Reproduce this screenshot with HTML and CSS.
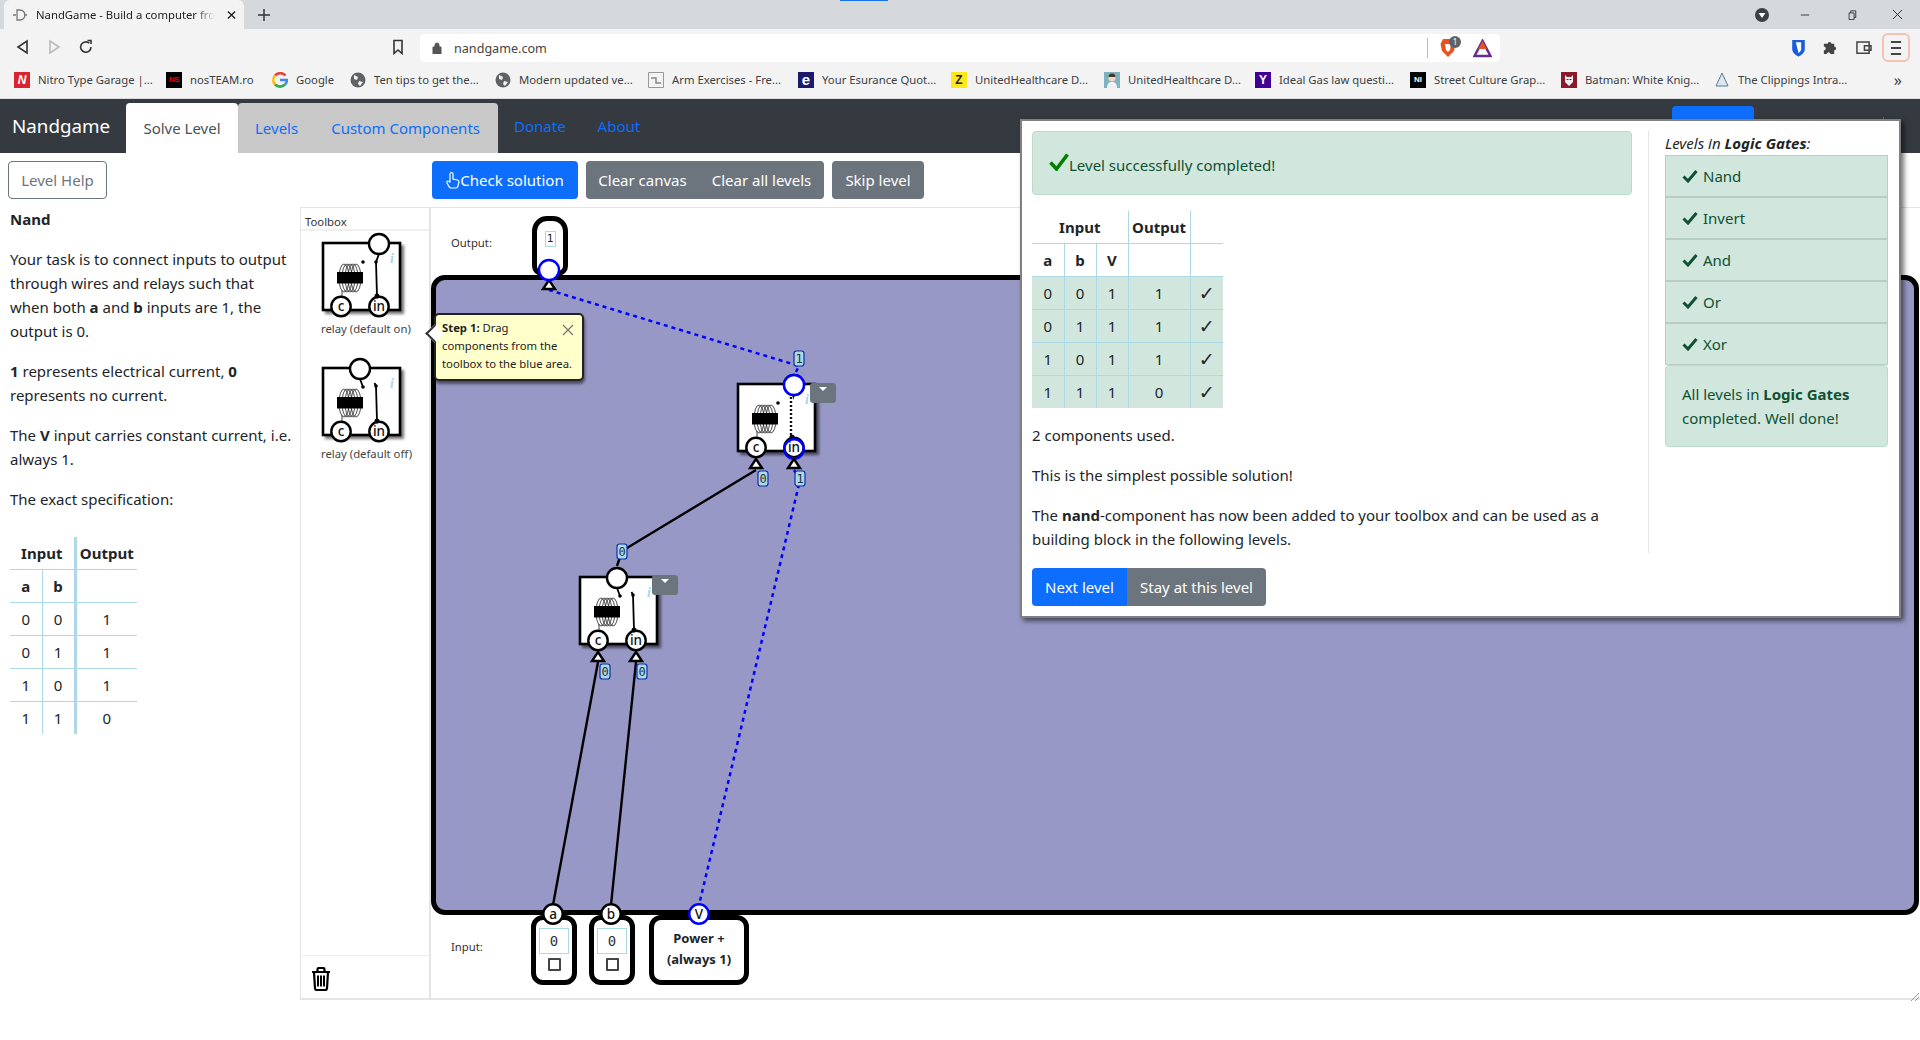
FILE: index.html
```html
<!DOCTYPE html>
<html lang="en">
<head>
<meta charset="utf-8">
<title>NandGame - Build a computer from scratch</title>
<link rel="stylesheet" href="styles.css">
</head>
<body>
<svg class="defs" aria-hidden="true">
  <defs>
    <filter id="soft" x="-20%" y="-20%" width="140%" height="140%"><feGaussianBlur stdDeviation="1.6"/></filter>
    <symbol id="relay-body" viewBox="-2 -11 100 86" overflow="visible">
      <rect x="3" y="3" width="79" height="69" fill="#000" opacity=".55" filter="url(#soft)"/>
      <rect x="1" y="1" width="77" height="67" fill="#fff" stroke="#000" stroke-width="2.6"/>
      <g fill="none" stroke="#222" stroke-width=".8">
        <ellipse cx="22" cy="36" rx="5" ry="14"/><ellipse cx="25" cy="36" rx="5" ry="14"/><ellipse cx="28" cy="36" rx="5" ry="14"/><ellipse cx="31" cy="36" rx="5" ry="14"/><ellipse cx="34" cy="36" rx="5" ry="14"/>
      </g>
      <rect x="15" y="30" width="26" height="11.500" fill="#000"/>
      <path d="M20 48V56" stroke="#444" stroke-width="1"/>
      <text class="info" x="68" y="21">i</text>
      <circle cx="19" cy="64.500" r="9.700" fill="#fff" stroke="#000" stroke-width="2.400"/>
      <circle cx="57" cy="64.500" r="9.700" fill="#fff" stroke="#000" stroke-width="2.400"/>
      <text class="pin" x="19" y="69">c</text>
      <text class="pin" x="57" y="69">in</text>
    </symbol>
    <symbol id="relay-on" viewBox="-2 -11 100 86" overflow="visible">
      <use href="#relay-body" x="-2" y="-11" width="100" height="86"/>
      <circle cx="41" cy="20" r="1.800" fill="#000"/>
      <path d="M57 12 54 20 55 54" fill="none" stroke="#000" stroke-width="1.800"/>
      <circle cx="54" cy="20" r="1.800" fill="#000"/><circle cx="55" cy="54" r="2.500" fill="#000"/>
      <circle cx="57" cy="2" r="10" fill="#fff" stroke="#000" stroke-width="2.400"/>
    </symbol>
    <symbol id="relay-off" viewBox="-2 -11 100 86" overflow="visible">
      <use href="#relay-body" x="-2" y="-11" width="100" height="86"/>
      <path d="M38 12 41 20" fill="none" stroke="#000" stroke-width="1.800"/>
      <circle cx="41" cy="20" r="1.800" fill="#000"/>
      <path d="M52.500 16 54 19 55 54" fill="none" stroke="#000" stroke-width="1.800"/>
      <circle cx="54" cy="19" r="1.800" fill="#000"/><circle cx="55" cy="54" r="2.500" fill="#000"/>
      <circle cx="38" cy="2" r="10" fill="#fff" stroke="#000" stroke-width="2.400"/>
    </symbol>
    <symbol id="globe" viewBox="0 0 16 16">
      <circle cx="8" cy="8" r="7.500" fill="#5f6368"/>
      <path d="M4 3 8 5 7 8 4 7ZM9 9 13 10 10 14 8 12Z" fill="#f3f3f3"/>
    </symbol>
    <symbol id="check-s" viewBox="0 0 16 14">
      <path d="M1.500 7.500 6 12 14.500 2" fill="none" stroke="currentColor" stroke-width="3"/>
    </symbol>
  </defs>
</svg>

<header class="browser">
  <div class="tabstrip">
    <div class="tab">
      <svg class="tab-ico" viewBox="0 0 16 16"><path d="M1 8H4M12 8H15M5 3V13H8A5 5 0 0 0 8 3Z" fill="none" stroke="#777" stroke-width="1.300"/></svg>
      <span class="tab-title">NandGame - Build a computer from scratch</span>
      <svg class="tab-x" viewBox="0 0 10 10"><path d="M1 1 9 9M9 1 1 9" stroke="#222" stroke-width="1.500"/></svg>
    </div>
    <svg class="tab-new" viewBox="0 0 12 12"><path d="M6 0V12M0 6H12" stroke="#333" stroke-width="1.500"/></svg>
    <div class="win-ctl">
      <svg class="win-list" viewBox="0 0 14 14"><circle cx="7" cy="7" r="7" fill="#3c4043"/><path d="M3.500 5H10.500L7 10Z" fill="#fff"/></svg>
      <svg class="win-btn win-min" viewBox="0 0 12 12"><path d="M1 6H11" stroke="#222"/></svg>
      <svg class="win-btn win-max" viewBox="0 0 12 12"><path d="M2.500 3.500H8.500V11.500H2.500ZM4.500 3.500V1H10.500V9H8.500" fill="none" stroke="#222"/></svg>
      <svg class="win-btn win-close" viewBox="0 0 12 12"><path d="M1 1 11 11M11 1 1 11" stroke="#222"/></svg>
    </div>
  </div>
  <div class="toolbar-row">
    <svg class="tb-ico back" viewBox="0 0 16 16"><path d="M12 2V14L3 8Z" fill="none" stroke="#333" stroke-width="1.600"/></svg>
    <svg class="tb-ico fwd" viewBox="0 0 16 16"><path d="M4 2V14L13 8Z" fill="none" stroke="#bbb" stroke-width="1.600"/></svg>
    <svg class="tb-ico reload" viewBox="0 0 16 16"><path d="M13 8A5.200 5.200 0 1 1 11.300 4.200M9.500 1.500 13 1.500V5" fill="none" stroke="#333" stroke-width="1.600"/></svg>
    <svg class="tb-ico bookmark" viewBox="0 0 16 16"><path d="M4 1.500H12V14.500L8 11 4 14.500Z" fill="none" stroke="#333" stroke-width="1.600"/></svg>
    <div class="omnibox">
      <svg class="lock" viewBox="0 0 10 12"><path d="M1 5H9V12H1ZM3 5V3A2 2 0 0 1 7 3V5" fill="#555" stroke="#555"/></svg>
      <span class="url">nandgame.com</span>
      <span class="omni-sep"></span>
      <span class="brave-wrap">
        <svg class="brave" viewBox="0 0 16 20"><path d="M3 1H13L15.500 6 14 13 8 19 2 13 .5 6Z" fill="#e8541e"/><path d="M5 6H11L10 12 8 14 6 12Z" fill="#fff"/></svg>
        <span class="brave-badge">1</span>
      </span>
      <svg class="bat" viewBox="0 0 20 20"><path d="M10 2 18.500 18H1.500Z" fill="none" stroke="#662d91" stroke-width="2.600"/><path d="M10 2 14.500 10.500H5.500Z" fill="#e8541e"/></svg>
    </div>
    <svg class="ext ext-bw" viewBox="0 0 16 20"><path d="M1 1H15V11C15 15 11 18 8 19.500 5 18 1 15 1 11Z" fill="#175ddc"/><path d="M5 3.500H11V11C11 13 9.500 14.500 8 15.500Z" fill="#fff"/></svg>
    <svg class="ext ext-pz" viewBox="0 0 16 16"><path d="M2 4H6A2 2 0 0 1 10 4H13V7A2 2 0 0 1 13 11V15H9A2 2 0 0 0 5 15H2V11A2 2 0 0 0 2 7Z" fill="#444"/></svg>
    <svg class="ext ext-wl" viewBox="0 0 18 16"><path d="M2 2H15V14H2ZM10 6H17V11H10Z" fill="#f3f3f3" stroke="#444" stroke-width="1.600"/></svg>
    <span class="menu-btn"><span></span><span></span><span></span></span>
  </div>
  <div class="bookmarks">
    <a class="bm"><span class="fav fav-n">N</span><span>Nitro Type Garage |...</span></a>
    <a class="bm"><span class="fav fav-ns">NS</span><span>nosTEAM.ro</span></a>
    <a class="bm"><svg class="fav" viewBox="0 0 16 16"><path d="M13.500 3.500A7 7 0 0 0 3 3.500" fill="none" stroke="#ea4335" stroke-width="2.600"/><path d="M3 3.500A7 7 0 0 0 3 12.500" fill="none" stroke="#fbbc05" stroke-width="2.600"/><path d="M3 12.500A7 7 0 0 0 13 12.500" fill="none" stroke="#34a853" stroke-width="2.600"/><path d="M13 12.500A7 7 0 0 0 15 8H8" fill="none" stroke="#4285f4" stroke-width="2.600"/></svg><span>Google</span></a>
    <a class="bm"><svg class="fav"><use href="#globe"/></svg><span>Ten tips to get the...</span></a>
    <a class="bm"><svg class="fav"><use href="#globe"/></svg><span>Modern updated ve...</span></a>
    <a class="bm"><svg class="fav" viewBox="0 0 16 16"><path d="M.5.5H15.500V15.500H.5Z" fill="#f4f4f4" stroke="#999"/><path d="M3 6H8V11H13" fill="none" stroke="#888" stroke-width="1.500"/></svg><span>Arm Exercises - Fre...</span></a>
    <a class="bm"><span class="fav fav-e">e</span><span>Your Esurance Quot...</span></a>
    <a class="bm"><span class="fav fav-z">Z</span><span>UnitedHealthcare D...</span></a>
    <a class="bm"><svg class="fav" viewBox="0 0 16 16"><path d="M0 0H16V16H0Z" fill="#7fb2bf"/><circle cx="8" cy="6" r="3.500" fill="#f1d6c2"/><path d="M3 16C3 11 5 10 8 10S13 11 13 16Z" fill="#eef2f4"/><path d="M4.500 5A3.500 3.500 0 0 1 11.500 5Z" fill="#4a3527"/></svg><span>UnitedHealthcare D...</span></a>
    <a class="bm"><span class="fav fav-y">Y</span><span>Ideal Gas law questi...</span></a>
    <a class="bm"><span class="fav fav-sc">NI</span><span>Street Culture Grap...</span></a>
    <a class="bm"><svg class="fav" viewBox="0 0 16 16"><path d="M0 0H16V16H0Z" fill="#8a1b2d"/><path d="M4 3 6 5H10L12 3V10L8 14 4 10Z" fill="#eee"/><path d="M5.500 7.500H7.500M8.500 7.500H10.500" stroke="#8a1b2d"/></svg><span>Batman: White Knig...</span></a>
    <a class="bm"><svg class="fav" viewBox="0 0 16 16"><path d="M8 1 14 14H2Z" fill="#dbe6ef" stroke="#5b7c99"/></svg><span>The Clippings Intra...</span></a>
    <span class="bm-more">»</span>
  </div>
</header>

<nav class="appnav">
  <a class="brand">Nandgame</a>
  <a class="ntab ntab-active">Solve Level</a>
  <div class="ntab-group">
    <a class="ntab-link">Levels</a>
    <a class="ntab-link">Custom Components</a>
  </div>
  <a class="nlink nlink-first">Donate</a>
  <a class="nlink">About</a>
</nav>

<div class="actions">
  <div class="actions-left"><button class="btn btn-outline">Level Help</button></div>
  <button class="btn btn-primary btn-check">
    <svg class="thumb" viewBox="0 0 14 18"><path d="M4 9V3A1.500 1.500 0 0 1 7 3V8L11.500 9C12.800 9.400 13 10 13 11L12 15C11.700 16.400 11 17 10 17H5C4 17 3.400 16.500 3 15.500L1 12C.6 11 1 10 2 10 3 10 3.500 10.500 4 11.500Z" fill="none" stroke="#fff" stroke-width="1.200"/></svg>Check solution
  </button>
  <div class="btn-group">
    <button class="btn btn-secondary btn-clear">Clear canvas</button>
    <button class="btn btn-secondary btn-clear-all">Clear all levels</button>
  </div>
  <button class="btn btn-secondary btn-skip">Skip level</button>
</div>

<main class="workspace">
  <section class="help">
    <h2 class="help-title">Nand</h2>
    <p>Your task is to connect inputs to output through wires and relays such that when both <b>a</b> and <b>b</b> inputs are 1, the output is 0.</p>
    <p><b>1</b> represents electrical current, <b>0</b> represents no current.</p>
    <p>The <b>V</b> input carries constant current, i.e. always 1.</p>
    <p>The exact specification:</p>
    <table class="spec">
      <tr><th colspan="2" class="sep">Input</th><th class="out">Output</th></tr>
      <tr class="ruled"><th class="col">a</th><th class="sep">b</th><td class="out"></td></tr>
      <tr class="ruled"><td class="col">0</td><td class="sep">0</td><td class="out">1</td></tr>
      <tr class="ruled"><td class="col">0</td><td class="sep">1</td><td class="out">1</td></tr>
      <tr class="ruled"><td class="col">1</td><td class="sep">0</td><td class="out">1</td></tr>
      <tr class="ruled"><td class="col">1</td><td class="sep">1</td><td class="out">0</td></tr>
    </table>
  </section>

  <aside class="toolbox">
    <div class="toolbox-head">Toolbox</div>
    <div class="toolbox-items">
      <figure class="tool">
        <svg class="tool-svg" width="100" height="86"><use href="#relay-on" width="100" height="86"/></svg>
        <figcaption>relay (default on)</figcaption>
      </figure>
      <figure class="tool">
        <svg class="tool-svg" width="100" height="86"><use href="#relay-off" width="100" height="86"/></svg>
        <figcaption>relay (default off)</figcaption>
      </figure>
    </div>
    <div class="trash">
      <svg class="trash-ico" viewBox="0 0 20 24"><path d="M6.500 4V2.500A1.500 1.500 0 0 1 8 1H12A1.500 1.500 0 0 1 13.500 2.500V4M1 5H19M3 5 4 21.500A1.800 1.800 0 0 0 5.800 23H14.200A1.800 1.800 0 0 0 16 21.500L17 5" fill="none" stroke="#000" stroke-width="2.200"/><path d="M7 8.500V19.500M10 8.500V19.500M13 8.500V19.500" stroke="#000" stroke-width="2"/></svg>
    </div>
  </aside>

  <section class="stage">
    <div class="io-row output-row">
      <span class="io-label out-label">Output:</span>
      <div class="output-box"><span class="num-small">1</span></div>
    </div>
    <div class="board"></div>
    <div class="io-row input-row">
      <span class="io-label">Input:</span>
      <div class="input-box"><span class="num-field">0</span><span class="chk"></span></div>
      <div class="input-box"><span class="num-field">0</span><span class="chk"></span></div>
      <div class="power-box"><span>Power +</span><span>(always 1)</span></div>
    </div>

    <svg class="wires" width="1488" height="793" viewBox="431 208 1488 793">
      <g fill="none" stroke="#00f" stroke-width="2.500" stroke-dasharray="4 4">
        <path d="M549 290 799 366 794 376"/>
        <path d="M794 470 800 480 699 905"/>
      </g>
      <g fill="none" stroke="#000" stroke-width="2.400">
        <path d="M756 470 622 551 617 566"/>
        <path d="M598 662 553 905"/>
        <path d="M636 662 611 905"/>
      </g>

      <use href="#relay-on" x="735" y="372" width="100" height="86"/>
      <path d="M791 397V435" stroke="#fff" stroke-width="4"/>
      <path d="M791 397V435" stroke="#111" stroke-width="2.400" stroke-dasharray="2 2"/>
      <g fill="none" stroke="#00f" stroke-width="2.400">
        <circle cx="794" cy="385" r="10" fill="#fff"/>
        <circle cx="794" cy="449" r="9.700"/>
      </g>
      <use href="#relay-off" x="577" y="565" width="100" height="86"/>

      <g class="tri" fill="#fff" stroke="#000" stroke-width="2.400">
        <path d="M549 280 555 289H543Z"/>
        <path d="M756 459 762 468H750Z"/>
        <path d="M794 459 800 468H788Z"/>
        <path d="M598 652 604 661H592Z"/>
        <path d="M636 652 642 661H630Z"/>
      </g>

      <circle cx="549" cy="270" r="10" fill="#fff" stroke="#00f" stroke-width="2.400"/>
      <circle cx="553" cy="914" r="9.700" fill="#fff" stroke="#000" stroke-width="2.400"/>
      <circle cx="611" cy="914" r="9.700" fill="#fff" stroke="#000" stroke-width="2.400"/>
      <circle cx="699" cy="914" r="9.700" fill="#fff" stroke="#00f" stroke-width="2.400"/>
      <text class="pin" x="553" y="918.500">a</text>
      <text class="pin" x="611" y="918.500">b</text>
      <text class="pin" x="699" y="918.500">V</text>

      <g class="wlabels">
        <rect x="794" y="351" width="10" height="15" rx="2.500"/><text x="799" y="362.500">1</text>
        <rect x="758" y="471" width="10" height="15" rx="2.500"/><text x="763" y="482.500">0</text>
        <rect x="795" y="471" width="10" height="15" rx="2.500"/><text x="800" y="482.500">1</text>
        <rect x="617" y="544" width="10" height="15" rx="2.500"/><text x="622" y="555.500">0</text>
        <rect x="600" y="664" width="10" height="15" rx="2.500"/><text x="605" y="675.500">0</text>
        <rect x="637" y="664" width="10" height="15" rx="2.500"/><text x="642" y="675.500">0</text>
      </g>
    </svg>

    <button class="node-menu node-menu-a"><span></span></button>
    <button class="node-menu node-menu-b"><span></span></button>

    <div class="tip">
      <svg class="tip-x" viewBox="0 0 12 12"><path d="M1 1 11 11M11 1 1 11" stroke="#777" stroke-width="1.300"/></svg>
      <b>Step 1:</b> Drag components from the toolbox to the blue area.
    </div>

    <svg class="resize-grip" viewBox="0 0 10 10"><path d="M1 9 9 1M5 9 9 5" stroke="#999"/></svg>
  </section>
</main>

<span class="nav-peek"></span>

<div class="modal">
  <div class="modal-body">
    <div class="modal-main">
      <div class="alert alert-top">
        <svg class="big-check" viewBox="0 0 20 18"><path d="M1.500 9.500 7.500 16 18.500 1.500" fill="none" stroke="#008000" stroke-width="3.600"/></svg>Level successfully completed!
      </div>
      <table class="result">
        <tr><th colspan="3">Input</th><th>Output</th><th></th></tr>
        <tr><th>a</th><th>b</th><th>V</th><th></th><th></th></tr>
        <tr class="ok"><td>0</td><td>0</td><td>1</td><td>1</td><td class="tick">✓</td></tr>
        <tr class="ok"><td>0</td><td>1</td><td>1</td><td>1</td><td class="tick">✓</td></tr>
        <tr class="ok"><td>1</td><td>0</td><td>1</td><td>1</td><td class="tick">✓</td></tr>
        <tr class="ok"><td>1</td><td>1</td><td>1</td><td>0</td><td class="tick">✓</td></tr>
      </table>
      <p>2 components used.</p>
      <p>This is the simplest possible solution!</p>
      <p class="last">The <b>nand</b>-component has now been added to your toolbox and can be used as a building block in the following levels.</p>
    </div>
    <div class="modal-side">
      <div class="side-title"><i>Levels in <b>Logic Gates</b>:</i></div>
      <ul class="levels">
        <li><svg class="lvl-check"><use href="#check-s"/></svg>Nand</li>
        <li><svg class="lvl-check"><use href="#check-s"/></svg>Invert</li>
        <li><svg class="lvl-check"><use href="#check-s"/></svg>And</li>
        <li><svg class="lvl-check"><use href="#check-s"/></svg>Or</li>
        <li><svg class="lvl-check"><use href="#check-s"/></svg>Xor</li>
      </ul>
      <div class="alert alert-side">All levels in <b>Logic Gates</b> completed. Well done!</div>
    </div>
  </div>
  <div class="modal-foot">
    <button class="btn btn-primary btn-next">Next level</button><button class="btn btn-secondary btn-stay">Stay at this level</button>
  </div>
</div>
</body>
</html>
```

FILE: styles.css
```css
* { box-sizing: border-box; }
html, body { margin: 0; height: 1040px; overflow: hidden; }
body {
  position: relative;
  background: #fff;
  color: #212529;
  font: 15px/24px "Noto Sans", "Open Sans", sans-serif;
}
p { margin: 0 0 16px; }
b, th { font-weight: 700; }
button { font: inherit; }
.defs { position: absolute; width: 0; height: 0; }

/* Browser chrome */
.browser { height: 99px; font-size: 11.3px; line-height: 16px; color: #3c4043; }
.tabstrip { position: relative; display: flex; align-items: flex-end; height: 29px; background: #d6d9dc; }
.tabstrip::before { content: ""; position: absolute; left: 840px; top: 0; width: 48px; height: 1px; background: #1a73e8; }
.tab { display: flex; align-items: center; width: 240px; height: 29px; margin-left: 4px; padding: 0 8px; background: #f3f3f3; border-radius: 6px 6px 0 0; color: #222; }
.tab-ico { width: 16px; height: 16px; flex: none; margin-right: 8px; }
.tab-title { flex: 1; overflow: hidden; white-space: nowrap; -webkit-mask-image: linear-gradient(90deg, #000 88%, transparent 99%); }
.tab-x { width: 9px; height: 10px; flex: none; margin-left: 10px; }
.tab-new { width: 12px; height: 12px; margin: 0 0 8px 14px; }
.win-ctl { display: flex; align-items: center; margin-left: auto; height: 29px; }
.win-list { width: 14px; height: 14px; margin-right: 31px; }
.win-btn { width: 10px; height: 10px; }
.win-min { margin-right: 37px; }
.win-max { margin-right: 35px; }
.win-close { width: 11px; height: 11px; margin-right: 17px; }

.toolbar-row { display: flex; align-items: center; height: 33px; background: #f3f3f3; }
.tb-ico { width: 16px; height: 16px; flex: none; margin-top: 2px; }
.back { margin-left: 15px; }
.fwd { margin-left: 15px; }
.reload { margin-left: 16px; }
.bookmark { margin-left: 296px; }
.omnibox { display: flex; align-items: center; width: 1080px; height: 28px; margin: 5px 0 0 14px; padding: 0 8px 0 12px; background: #fff; border-radius: 5px; }
.lock { width: 10px; height: 12px; margin-right: 12px; }
.url { margin-top: 2px; font-size: 12.6px; color: #444; }
.omni-sep { width: 1px; height: 20px; margin-left: auto; background: #bbb; }
.brave-wrap { position: relative; display: block; width: 18px; height: 20px; margin-left: 12px; }
.brave { display: block; width: 16px; height: 20px; }
.brave-badge { position: absolute; left: 9px; top: -2px; width: 12px; height: 12px; border-radius: 50%; background: #5f6368; color: #fff; font-size: 8px; line-height: 12px; text-align: center; }
.bat { width: 19px; height: 19px; margin-left: 15px; }
.ext { flex: none; margin-top: 4px; }
.ext-bw { width: 15px; height: 18px; margin-left: 291px; }
.ext-pz { width: 15px; height: 15px; margin-left: 16px; }
.ext-wl { width: 17px; height: 15px; margin-left: 18px; }
.menu-btn { display: flex; flex-direction: column; align-items: center; justify-content: center; gap: 4px; width: 28px; height: 29px; margin: 4px 0 0 10px; border: 2px solid #f6c2b2; border-radius: 6px; }
.menu-btn span { width: 10px; height: 2px; background: #444; }

.bookmarks { display: grid; grid-template-columns: 152px 106px 78px 145px 153px 150px 153px 153px 151px 155px 151px 153px 160px 1fr; align-items: center; height: 37px; padding-left: 14px; background: #f3f3f3; border-bottom: 1px solid #dcdcdc; }
.bm { display: flex; align-items: center; gap: 8px; white-space: nowrap; }
.fav { display: block; flex: none; width: 16px; height: 16px; text-align: center; font: 700 12px/16px "Liberation Sans", sans-serif; }
.fav-n { background: #d9232e; color: #fff; font-style: italic; }
.fav-ns { background: #000; color: #e00; font-size: 8px; letter-spacing: -.5px; }
.fav-e { background: #1c1a6b; color: #fff; font-size: 15px; }
.fav-z { background: #ffe81a; color: #222; }
.fav-y { background: #410093; color: #fff; }
.fav-sc { background: #000; color: #fff; font-size: 8px; }
.bm-more { justify-self: end; margin-right: 18px; font-size: 16px; }

/* App nav */
.appnav { display: flex; align-items: flex-end; height: 54px; background: #343a40; }
.brand { width: 126px; padding: 0 0 12px 12px; color: #fff; font-size: 18.800px; line-height: 30px; }
.ntab { display: block; width: 112px; height: 50px; padding-top: 13px; text-align: center; border-radius: 4px 4px 0 0; }
.ntab-active { background: #fff; color: #495057; }
.ntab-group { display: flex; gap: 33px; height: 50px; width: 260px; padding: 13px 17px 0; background: #c8c8c8; border-radius: 4px 4px 0 0; color: #0d6efd; }
.nlink { color: #0d6efd; margin-left: 32px; padding-bottom: 15px; }
.nlink-first { margin-left: 16px; }

/* Buttons */
.btn { display: inline-block; height: 38px; padding: 0; border: 1px solid transparent; border-radius: 4px; font-size: 15px; line-height: 24px; text-align: center; white-space: nowrap; }
.btn-primary { background: #0d6efd; color: #fff; }
.btn-secondary { background: #6c757d; color: #fff; }
.btn-outline { width: 99px; background: #fff; border-color: #6c757d; color: #6c757d; }

.actions { display: flex; align-items: flex-start; gap: 8px; height: 54px; padding-top: 8px; }
.actions-left { width: 424px; padding-left: 8px; }
.btn-check { display: flex; align-items: center; justify-content: center; width: 146px; }
.thumb { width: 14px; height: 18px; }
.btn-group { display: flex; }
.btn-clear { width: 113px; border-radius: 4px 0 0 4px; }
.btn-clear-all { width: 125px; border-radius: 0 4px 4px 0; }
.btn-skip { width: 92px; }

/* Workspace */
.workspace { display: grid; grid-template-columns: 300px 131px 1fr; height: 793px; }
.help { padding: 0 8px 0 10px; }
.help-title { margin: 0 0 16px; font-size: 15px; line-height: 24px; font-weight: 700; }
.spec { margin-top: 26px; border-collapse: collapse; text-align: center; }
.spec th, .spec td { height: 33px; padding: 0; font-size: 15px; }
.spec tr:first-child th { height: 32px; }
.spec .ruled > * { border-top: 1px solid #add8e6; }
.spec .col { width: 32px; border-right: 1px solid #add8e6; }
.spec .sep { width: 33px; border-right: 3px solid #add8e6; }
.spec .out { width: 62px; }

.toolbox { display: flex; flex-direction: column; border: 1px solid #e4e4e4; border-width: 1px 2px 2px 1px; font-size: 11.3px; line-height: 18px; color: #444; }
.toolbox-head { height: 23px; padding: 4px 0 0 4px; background: #fff; border-bottom: 2px solid #f0f0f0; line-height: 20px; color: #333; }
.toolbox-items { flex: 1; }
.tool { margin: 0 0 18px 19px; }
.tool-svg { display: block; overflow: visible; }
.tool figcaption { margin: 3px 0 1px 1px; white-space: nowrap; }
.trash { height: 43px; padding: 11px 0 0 10px; border-top: 1px solid #eee; }
.trash-ico { display: block; width: 20px; height: 24px; }

.pin { font: 500 13.500px "Noto Sans", sans-serif; text-anchor: middle; fill: #111; }
.info { font: italic 700 14px "Liberation Serif", serif; fill: #a8d8ea; }

.stage { position: relative; display: flex; flex-direction: column; padding-right: 1px; border: 1px solid #e4e4e4; border-width: 1px 0 2px 0; }
.io-row { display: flex; padding-left: 20px; }
.io-label { width: 81px; font-size: 11.3px; line-height: 18px; color: #333; }
.output-row { height: 67px; padding-top: 8px; }
.out-label { padding-top: 18px; }
.output-box { display: flex; justify-content: center; align-items: flex-start; width: 36px; height: 60px; padding-top: 10px; border: 5px solid #000; border-radius: 15px 15px 10px 10px; }
.num-small { width: 11px; height: 16px; border: 1px solid #add8e6; font: 11px/14px "DejaVu Sans Mono", monospace; text-align: center; }
.board { flex: none; height: 640px; background: #9898c6; border: 5px solid #000; border-radius: 14px; }
.input-row { align-items: flex-start; gap: 12px; height: 83px; }
.input-row .io-label { width: 80px; margin-right: -12px; padding-top: 23px; }
.input-box { display: flex; flex-direction: column; align-items: center; width: 46px; height: 70px; padding-top: 8px; border: 5px solid #000; border-radius: 12px; }
.input-box + .power-box { margin-left: 2px; }
.num-field { width: 30px; height: 26px; border: 1px solid #add8e6; font: 14px/24px "DejaVu Sans Mono", monospace; text-align: center; color: #333; }
.chk { width: 13px; height: 13px; margin-top: 4px; border: 2px solid #444; border-radius: 1px; background: #fff; }
.power-box { display: flex; flex-direction: column; align-items: center; width: 100px; height: 70px; padding-top: 8px; border: 5px solid #000; border-radius: 12px; font-size: 13px; line-height: 21px; font-weight: 700; }

.wires { position: absolute; left: 0; top: 0; overflow: visible; }
.wlabels rect { fill: #add8e6; stroke: #0b2fa8; stroke-width: 1.200; }
.wlabels text { font: 12px "DejaVu Sans Mono", monospace; text-anchor: middle; fill: #234; }

.node-menu { position: absolute; width: 26px; height: 20px; padding: 0; border: 0; border-radius: 3px; background: #6c757d; }
.node-menu span { display: block; width: 0; height: 0; margin: -6px auto 0; border: 4px solid transparent; border-top: 4px solid #fff; border-bottom: 0; }
.node-menu-a { left: 379px; top: 175px; }
.node-menu-b { left: 221px; top: 367px; }

.tip { position: absolute; left: 3px; top: 105px; width: 150px; height: 68px; padding: 4px 6px; background: #ffc; border: 2px solid #222; border-radius: 5px; box-shadow: 1px 3px 3px rgba(0,0,0,.5); font-size: 11.3px; line-height: 18px; color: #222; }
.tip::before { content: ""; position: absolute; left: -8px; top: 12px; width: 11px; height: 11px; background: #fff; border: 2px solid #333; border-width: 0 0 2px 2px; transform: rotate(45deg); }
.tip-x { position: absolute; right: 8px; top: 9px; width: 12px; height: 12px; }
.resize-grip { position: absolute; right: 0; bottom: -4px; width: 10px; height: 10px; }

.nav-peek { position: absolute; left: 1672px; top: 106px; width: 82px; height: 14px; background: #0d6efd; border-radius: 4px 4px 0 0; }
.nav-peek::after { content: ""; position: absolute; left: 211px; top: 11px; width: 1px; height: 3px; background: #0d6efd; }

/* Completion dialog */
.modal { position: absolute; left: 1020px; top: 119px; width: 881px; height: 499px; padding: 10px 10px 0 10px; background: #fff; border: 2px solid #808080; box-shadow: 3px 3px 5px rgba(0,0,0,.55); }
.modal-body { display: grid; grid-template-columns: 616px 1fr; height: 422px; }
.modal-main { padding-right: 17px; }
.alert { background: #d1e7dd; border: 1px solid #badbcc; color: #0f5132; border-radius: 4px; }
.alert-top { display: flex; align-items: center; width: 600px; height: 64px; padding: 4px 16px 0; }
.big-check { width: 20px; height: 18px; margin-bottom: 6px; }
.result { margin: 16px 0 15px; border-collapse: collapse; text-align: center; }
.result th, .result td { height: 33px; padding: 0; border: 1px solid #add8e6; font-size: 15px; }
.result tr:first-child th { height: 32px; border-top: 0; }
.result tr > *:first-child { border-left: 0; }
.result tr > *:last-child { border-right: 0; }
.result tr:last-child td { border-bottom: 0; }
.result tr:first-child th:first-child { border-left: 0; width: 96px; }
.result tr:nth-child(2) th { width: 32px; }
.result tr:nth-child(2) th:nth-child(4) { width: 62px; }
.result tr:nth-child(2) th:nth-child(5) { width: 33px; }
.result .ok { background: #d1e7dd; }
.result .tick { font: 700 19px/24px "DejaVu Sans", sans-serif; }
.last { margin: 0; }
.modal-side { position: relative; padding-left: 16px; border-left: 1px solid #e5e5e5; }
.side-title { height: 24px; }
.levels { width: 223px; margin: 0; padding: 0; list-style: none; color: #0f5132; }
.levels li { display: flex; align-items: center; height: 42px; padding: 0 0 1px 16px; background: #d1e7dd; border: 1px solid #b6cfc4; border-bottom-width: 1.500px; }
.lvl-check { width: 16px; height: 14px; margin-right: 5px; }
.alert-side { width: 223px; height: 82px; padding: 16px; }
.modal-foot { display: flex; margin-top: 15px; }
.btn-next { width: 95px; border-radius: 4px 0 0 4px; }
.btn-stay { width: 139px; border-radius: 0 4px 4px 0; }
```
